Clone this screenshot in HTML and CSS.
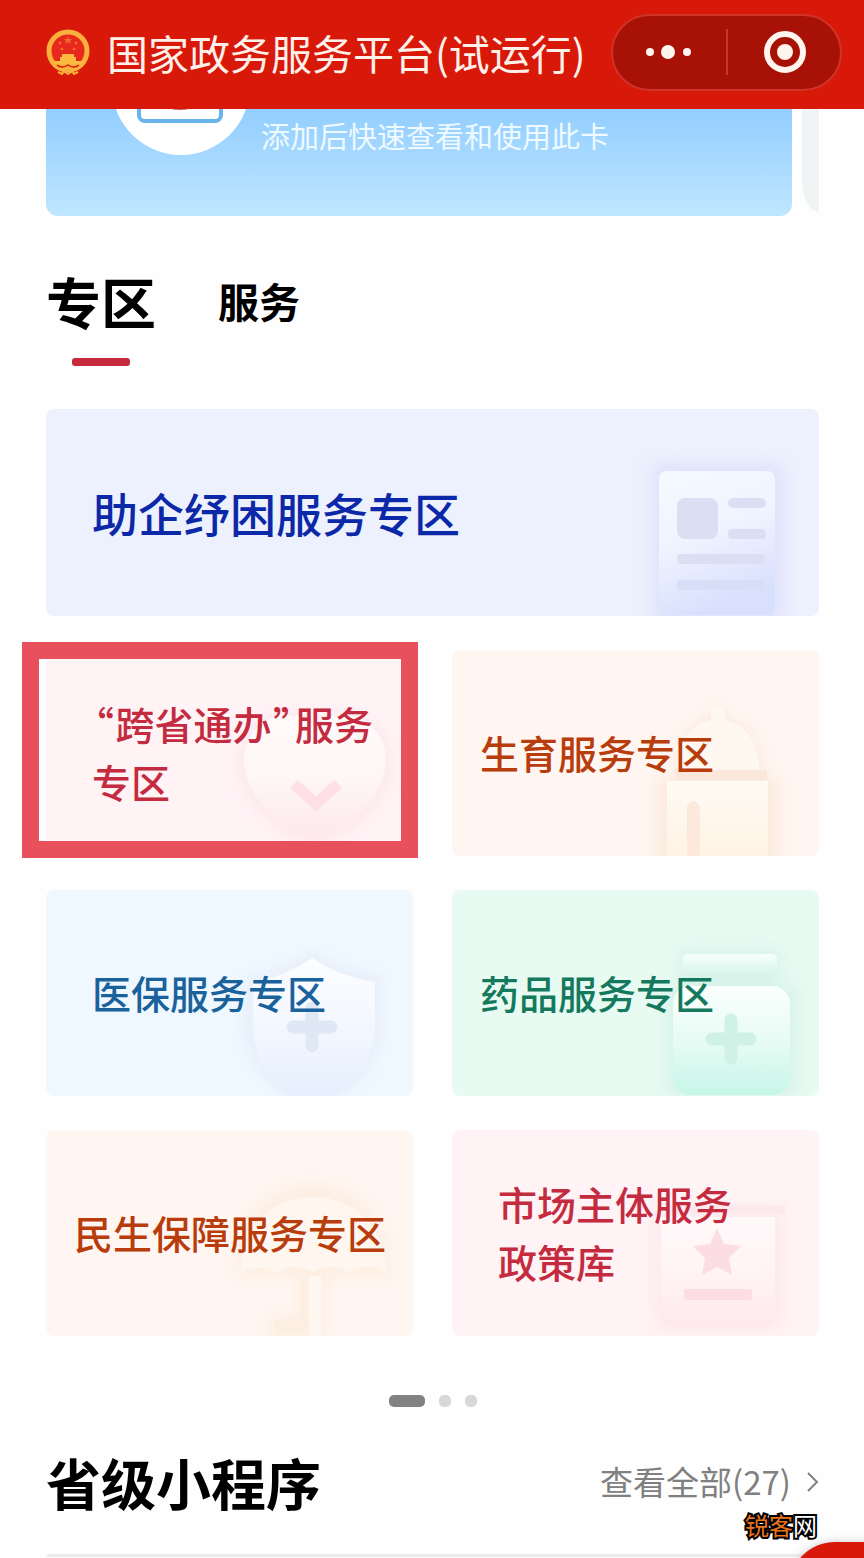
FILE: index.html
```html
<!DOCTYPE html>
<html lang="zh-CN">
<head>
    <meta charset="utf-8">
    <meta name="viewport" content="width=device-width, initial-scale=1">
    <title>国家政务服务平台</title>
    <link rel="stylesheet" href="styles.css">
</head>
<body>
    <header class="topbar">
        <svg class="emblem" viewBox="0 0 44 46" aria-hidden="true">
            <circle cx="22" cy="22" r="19" fill="#e8281c" stroke="#f9b03c" stroke-width="5"/>
            <path d="M2 26c1 8 5 12 10 15h20c5-3 9-7 10-15l-7 7H9z" fill="#f9b03c"/>
            <path d="M14 32v-4h2v-3h12v3h2v4h6v3H8v-3z" fill="#fcb83f"/>
            <path d="M11 36q5 4 11 0q6 4 11 0" fill="none" stroke="#d81808" stroke-width="1.5"/>
            <path d="M22 7l1 3h3l-2 2 1 3-3-2-3 2 1-3-2-2h3z" fill="#f0682c"/>
            <g fill="#f0682c"><circle cx="14" cy="14" r="1.5"/><circle cx="30" cy="14" r="1.5"/><circle cx="16" cy="20" r="1.5"/><circle cx="28" cy="20" r="1.5"/></g>
            <path d="M12 43l4 2 2-3 4 3 4-3 2 3 4-2" fill="none" stroke="#f9b03c" stroke-width="2"/>
        </svg>
        <h1 class="title">国家政务服务平台(试运行)</h1>
        <div class="capsule">
            <button type="button" aria-label="更多">
                <svg width="46" height="16" viewBox="0 0 46 16"><circle cx="4" cy="8" r="4"/><circle cx="22" cy="8" r="7"/><circle cx="41" cy="8" r="4"/></svg>
            </button>
            <button type="button" aria-label="关闭">
                <svg width="44" height="44" viewBox="0 0 44 44"><circle cx="23" cy="22" r="18" fill="none" stroke="#fff4ee" stroke-width="6"/><circle cx="23" cy="22" r="8"/></svg>
            </button>
        </div>
    </header>

    <main class="page">
        <div class="carousel">
            <a class="card" href="#">
                <svg width="132" height="47" viewBox="0 0 132 47" aria-hidden="true">
                    <circle cx="66" cy="-23" r="69" fill="#fff"/>
                    <rect x="24" y="-40" width="82" height="52" rx="6" fill="#fff" stroke="#69b4ea" stroke-width="4"/>
                    <ellipse cx="65" cy="-3" rx="13" ry="4" fill="#c9566a"/>
                </svg>
                <span>添加后快速查看和使用此卡</span>
            </a>
            <div class="next-card"></div>
        </div>

        <nav class="tabs">
            <button type="button" class="tab active">专区</button>
            <button type="button" class="tab">服务</button>
        </nav>

        <div class="zones">
            <a class="zone wide indigo indent" href="#">
                <svg class="art" viewBox="0 0 190 206" aria-hidden="true">
                    <defs><linearGradient id="g1" x1="0" y1="0" x2="0.3" y2="1"><stop offset="0" stop-color="#f5f9ff"/><stop offset=".5" stop-color="#f0f4ff"/><stop offset="1" stop-color="#d9e0fd"/></linearGradient></defs>
                    <rect class="glow" x="22" y="52" width="134" height="164" rx="12" fill="#e1e4fb"/>
                    <rect x="30" y="61" width="116" height="144" rx="8" fill="url(#g1)"/>
                    <g fill="#dcdff4">
                        <rect x="48" y="88" width="41" height="41" rx="8"/>
                        <rect x="99" y="88" width="38" height="10" rx="5"/>
                        <rect x="99" y="119" width="38" height="10" rx="4"/>
                        <rect x="48" y="144" width="88" height="10" rx="4"/>
                        <rect x="48" y="170" width="88" height="10" rx="4" fill="#d9def8"/>
                    </g>
                </svg>
                <span>助企纾困服务专区</span>
            </a>
            <a class="zone pink indent marked" href="#">
                <svg class="art" viewBox="0 0 190 206" aria-hidden="true">
                    <defs><linearGradient id="g2" x1="0" y1="0" x2="0" y2="1"><stop offset="0" stop-color="#fffafa"/><stop offset=".5" stop-color="#fef6f7"/><stop offset="1" stop-color="#fee8ec"/></linearGradient></defs>
                    <path class="glow" d="M92 72C60 46 10 70 14 120c4 36 44 70 78 78c34-8 74-42 78-78c4-50-46-74-78-48z" fill="#fdeaed"/>
                    <path d="M92 76C66 52 20 70 21 112c2 36 40 70 71 77c31-7 69-41 71-77c1-42-45-60-71-36z" fill="url(#g2)"/>
                    <path d="M71 134l22 20 22-20" fill="none" stroke="#fddfe5" stroke-width="11"/>
                </svg>
                <span><span class="quote">“</span>跨省通办<span class="quote">”</span>服务<br>专区</span>
            </a>
            <a class="zone orange" href="#">
                <svg class="art" viewBox="0 0 190 206" aria-hidden="true">
                    <defs><linearGradient id="g3" x1="0" y1="0" x2="0" y2="1"><stop offset="0" stop-color="#fffaf4"/><stop offset="1" stop-color="#fff3e4"/></linearGradient></defs>
                    <path class="glow" d="M28 216v-88h16c0-32 14-54 34-60q9-22 22 0c24 8 36 32 36 60h14v88z" fill="#fcebdf"/>
                    <path d="M48 120c0-26 14-46 34-50v-9q7-12 14 0v9c22 4 34 24 34 50z" fill="#fff8f1"/>
                    <rect x="46" y="120" width="92" height="10" fill="#fce8db"/>
                    <rect x="38" y="131" width="101" height="75" fill="url(#g3)"/>
                    <path d="M58 206v-48a6 6 0 0 1 13 0v48z" fill="#fce9db"/>
                </svg>
                <span>生育服务专区</span>
            </a>
            <a class="zone blue indent" href="#">
                <svg class="art" viewBox="0 0 190 206" aria-hidden="true">
                    <defs><linearGradient id="g4" x1="0" y1="0" x2="0" y2="1"><stop offset="0" stop-color="#fcfdff"/><stop offset=".5" stop-color="#f3f7ff"/><stop offset="1" stop-color="#e5effe"/></linearGradient></defs>
                    <path class="glow" d="M90 60q28 20 70 26v46q0 48-46 78H66q-46-30-46-78V86q42-6 70-26z" fill="#e7effb"/>
                    <path d="M89 68q26 18 63 24v42c0 30-16 56-38 70q-24 8-48 0c-22-14-36-40-36-70V92q34-6 59-24z" fill="url(#g4)"/>
                    <path d="M89 118v38M70 137h38" stroke="#e0e7f5" stroke-width="13" stroke-linecap="round"/>
                </svg>
                <span>医保服务专区</span>
            </a>
            <a class="zone green" href="#">
                <svg class="art" viewBox="0 0 190 206" aria-hidden="true">
                    <defs>
                        <linearGradient id="g5" x1="0" y1="0" x2="0" y2="1"><stop offset="0" stop-color="#fafffd"/><stop offset=".5" stop-color="#e8fbf5"/><stop offset="1" stop-color="#c6f6e8"/></linearGradient>
                        <linearGradient id="g6" x1="0" y1="0" x2="0" y2="1"><stop offset="0" stop-color="#f7fffc"/><stop offset="1" stop-color="#d9f7ed"/></linearGradient>
                    </defs>
                    <path class="glow" d="M50 58h102v38h18v110H36V96h14z" fill="#d9f3ea"/>
                    <rect x="54" y="64" width="94" height="18" rx="5" fill="url(#g6)"/>
                    <rect x="44" y="96" width="117" height="109" rx="18" fill="url(#g5)"/>
                    <path d="M102 130v38M83 149h38" stroke="#d0f1e6" stroke-width="13" stroke-linecap="round"/>
                </svg>
                <span>药品服务专区</span>
            </a>
            <a class="zone orange" href="#">
                <svg class="art" viewBox="0 0 190 206" aria-hidden="true">
                    <path class="glow" d="M12 146c0-58 34-92 78-92s78 34 78 92h-64v64H48v-24h28v-40z" fill="#fdeee2"/>
                    <path d="M18 142c2-46 32-75 72-75s72 29 74 75q-20-10-38 0q-18-10-36 0q-18-10-36 0q-18-8-36 0z" fill="#fff7ef"/>
                    <path d="M92 146v60" stroke="#fff8f1" stroke-width="12"/>
                    <path d="M80 150v36q-2 14-14 16-10-2-12-12" fill="none" stroke="#fdeee2" stroke-width="6"/>
                </svg>
                <span>民生保障服务专区</span>
            </a>
            <a class="zone pink indent" href="#">
                <svg class="art" viewBox="0 0 190 206" aria-hidden="true">
                    <defs><linearGradient id="g7" x1="0" y1="0" x2="0" y2="1"><stop offset="0" stop-color="#fff9fa"/><stop offset=".5" stop-color="#fff3f5"/><stop offset="1" stop-color="#fee9ec"/></linearGradient></defs>
                    <path class="glow" d="M24 78h132v112q-4 12-14 12H38q-14-2-14-14z" fill="#fdebee"/>
                    <rect x="40" y="75" width="116" height="9" fill="#fde9ed"/>
                    <path d="M32 87h114v92q0 20-20 20H52q-20 0-20-20z" fill="url(#g7)"/>
                    <path d="M88 98l7 16 17 2-12 12 3 17-15-8-15 8 3-17-12-12 17-2z" fill="#fddde4"/>
                    <rect x="55" y="159" width="68" height="11" rx="3" fill="#fddde4"/>
                </svg>
                <span>市场主体服务<br>政策库</span>
            </a>
        </div>

        <div class="pager"><i class="on"></i><i></i><i></i></div>

        <section class="province">
            <h2>省级小程序</h2>
            <a class="more" href="#">查看全部(27)
                <svg width="12" height="24" viewBox="0 0 12 24" aria-hidden="true"><path d="M1 4l9 9-9 9" fill="none" stroke="#808080" stroke-width="2"/></svg>
            </a>
            <div class="watermark"><b>锐客</b>网</div>
        </section>
        <div class="panel"></div>
    </main>
    <button type="button" class="float-btn" aria-label="客服"></button>
</body>
</html>
```
FILE: styles.css
```css
* {
    box-sizing: border-box;
}

html, body {
    overflow: hidden;
}

body {
    margin: 0;
    background: #fefefe;
    color: #000;
    font-family: "Noto Sans CJK SC", sans-serif;
}

a {
    color: inherit;
    text-decoration: none;
}

button {
    padding: 0;
    border: 0;
    background: none;
    color: inherit;
    font-family: inherit;
}

/* top bar */
.topbar {
    display: flex;
    align-items: center;
    height: 109px;
    padding: 0 22px 5px 46px;
    background: #d81808;
}

.emblem {
    width: 44px;
    height: 46px;
}

.title {
    flex: 1;
    margin: 0 0 0 17px;
    color: #fff0ea;
    font-size: 41px;
    font-weight: 400;
    line-height: 60px;
    white-space: nowrap;
}

.capsule {
    display: flex;
    align-items: center;
    width: 231px;
    height: 77px;
    border: 2px solid #d03328;
    border-radius: 39px;
    background: #a81105;
}

.capsule button {
    display: flex;
    flex: 1;
    align-items: center;
    justify-content: center;
    height: 46px;
}

.capsule button + button {
    border-left: 2px solid #c4392e;
}

.capsule svg {
    fill: #fff4ee;
}

/* card carousel */
.page {
    padding: 0 45px 0 46px;
}

.carousel {
    display: flex;
    gap: 10px;
    height: 107px;
}

.card {
    display: flex;
    flex: 1;
    gap: 14px;
    padding-left: 69px;
    border-radius: 0 0 12px 12px;
    background: linear-gradient(#92ceff, #bfe6ff);
    color: #effaff;
    font-size: 29px;
    line-height: 53px;
}

.next-card {
    width: 17px;
    height: 103px;
    border-bottom-left-radius: 17px 32px;
    background: #f1f4f4;
}

/* tabs */
.tabs {
    display: flex;
    align-items: flex-start;
    gap: 62px;
    margin-top: 44px;
    height: 149px;
}

.tab {
    font-size: 41px;
    font-weight: 700;
    line-height: 80px;
}

.tab.active {
    font-size: 55px;
}

.tab.active::after {
    content: "";
    display: block;
    width: 58px;
    height: 8px;
    margin: 18px auto 0;
    border-radius: 3px;
    background: #c52b3d;
}

/* zones */
.zones {
    display: grid;
    grid-template-columns: 1fr 1fr;
    grid-template-rows: 207px;
    grid-auto-rows: 206px;
    gap: 34px 39px;
}

.zone {
    position: relative;
    display: flex;
    align-items: center;
    padding: 0 0 2px 28px;
    border-radius: 8px;
    font-size: 39px;
    font-weight: 500;
    line-height: 58px;
}

.zone > span {
    position: relative;
    white-space: nowrap;
}

.indent {
    padding-left: 46px;
}

.wide {
    grid-column: 1 / 3;
    font-size: 46px;
}

.art {
    position: absolute;
    right: 0;
    bottom: 0;
    width: 190px;
    height: 206px;
    overflow: hidden;
}

.glow {
    filter: blur(7px);
}

.indigo {
    background: #edf0fd;
    color: #0b28a8;
}

.pink {
    background: #fff3f6;
    color: #c42b3f;
}

.orange {
    background: #fff6f1;
    color: #b83c0c;
}

.blue {
    background: #f0f8ff;
    color: #1a629c;
}

.green {
    background: #e8fbf3;
    color: #15795d;
}

/* narrow quotes instead of the full-width ones */
.quote {
    padding: 0 2px;
    font-feature-settings: "palt";
}

.marked::after {
    content: "";
    position: absolute;
    top: -8px;
    right: -5px;
    bottom: -2px;
    left: -24px;
    border: 17px solid #e8505b;
}

.pager {
    display: flex;
    justify-content: center;
    gap: 14px;
    margin-top: 59px;
}

.pager i {
    width: 12px;
    height: 12px;
    border-radius: 5px;
    background: #d8d8d8;
}

.pager .on {
    width: 36px;
    background: #828282;
}

/* province mini programs */
.province {
    position: relative;
    display: flex;
    align-items: center;
    justify-content: space-between;
    margin-top: 34px;
    line-height: 80px;
}

.province h2 {
    margin: 0;
    font-size: 55px;
    font-weight: 700;
}

.more {
    display: flex;
    align-items: center;
    gap: 16px;
    color: #808080;
    font-size: 33px;
}

.watermark {
    position: absolute;
    right: 2px;
    bottom: -20px;
    color: #fff;
    font-size: 24px;
    line-height: 32px;
    -webkit-text-stroke: 4px #000;
    paint-order: stroke fill;
}

.watermark b {
    color: #e8741c;
    font-weight: 400;
}

.panel {
    height: 3px;
    margin-top: 33px;
    border-radius: 3px 3px 0 0;
    background: #ececec;
}

.float-btn {
    position: fixed;
    right: -10px;
    bottom: -76px;
    width: 85px;
    height: 92px;
    border-radius: 46px 0 0 46px;
    background: #d81808;
    box-shadow: 0 0 8px #cccccc;
}
```
